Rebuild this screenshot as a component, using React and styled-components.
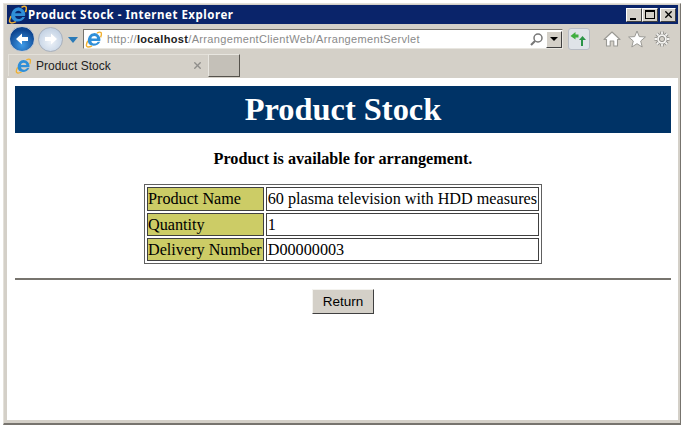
import React from 'react';
import styled, { createGlobalStyle } from 'styled-components';
import { X } from 'lucide-react';

const Global = createGlobalStyle`
  html, body {
    margin: 0;
    background: #fff;
  }
`;

const Frame = styled.div`
  box-sizing: border-box;
  width: 678px;
  height: 422px;
  margin: 3px 0 0 3px;
  background: #d4d0c8;
  border-top: 1px solid #e4e1da;
  border-left: 1px solid #e4e1da;
  border-right: 1px solid #77746e;
  border-bottom: 2px solid #77746e;
  padding: 1px 2px 3px 3px;
  display: flex;
  flex-direction: column;
`;

const TitleBar = styled.div`
  height: 19px;
  flex: none;
  background: #0a246a;
  display: flex;
  align-items: center;
  padding: 0 2px 0 1px;
  color: #fff;
`;

const TitleText = styled.span`
  font: bold 11.5px "Noto Sans", sans-serif;
  letter-spacing: 0.52px;
  margin-left: 1px;
  flex: 1;
  white-space: nowrap;
`;

const WinButton = styled.div`
  box-sizing: border-box;
  width: 16px;
  height: 14px;
  margin-left: ${p => p.$gap || 0}px;
  background: #d4d0c8;
  border: 1px solid;
  border-color: #fff #404040 #404040 #fff;
  display: flex;
  align-items: ${p => p.$align || 'center'};
  justify-content: center;
  color: #000;
`;

const MinGlyph = styled.div`
  width: 6px;
  height: 2px;
  background: #000;
  margin-bottom: 1px;
  margin-right: 3px;
`;

const MaxGlyph = styled.div`
  box-sizing: border-box;
  width: 10px;
  height: 9px;
  border: 1px solid #000;
  border-top-width: 2px;
`;

const Toolbar = styled.div`
  height: 30px;
  flex: none;
  display: flex;
  align-items: center;
  padding-left: 2px;
`;

const NavButton = styled.div`
  width: ${p => p.$size}px;
  height: ${p => p.$size}px;
  border-radius: 50%;
  margin-left: ${p => p.$gap || 0}px;
  display: flex;
  align-items: center;
  justify-content: center;
  flex: none;
  box-sizing: border-box;
  background: ${p => p.$bg};
  border: 1px solid ${p => p.$line};
`;

const RecentArrow = styled.div`
  width: 0;
  height: 0;
  margin: 1px 5px 0 5px;
  border-left: 5px solid transparent;
  border-right: 5px solid transparent;
  border-top: 6px solid #2a7ab8;
  flex: none;
`;

const AddressBar = styled.div`
  box-sizing: border-box;
  width: 480px;
  height: 20px;
  flex: none;
  background: #fff;
  border: 1px solid;
  border-color: #77746e #e8e6e0 #e8e6e0 #77746e;
  display: flex;
  align-items: center;
  padding-left: 1px;
  font: 11px "Liberation Sans", Arial, sans-serif;
  color: #8a8a8a;
`;

const UrlText = styled.span`
  flex: 1;
  margin-left: 5px;
  white-space: nowrap;
  letter-spacing: 0.34px;
  b {
    color: #222;
    font-weight: bold;
  }
`;

const DropButton = styled.div`
  box-sizing: border-box;
  width: 16px;
  height: 17px;
  margin-left: 2px;
  background: #d4d0c8;
  border: 1px solid;
  border-color: #fff #404040 #404040 #fff;
  display: flex;
  align-items: center;
  justify-content: center;
  &::after {
    content: '';
    border-left: 4px solid transparent;
    border-right: 4px solid transparent;
    border-top: 4px solid #000;
  }
`;

const CompatButton = styled.div`
  box-sizing: border-box;
  width: 22px;
  height: 22px;
  margin-left: 5px;
  border: 1px solid #b8bcc4;
  border-radius: 3px;
  background: #dfe3e8;
  display: flex;
  align-items: center;
  justify-content: center;
  flex: none;
`;

const ToolIcons = styled.div`
  display: flex;
  gap: 7px;
  margin-left: 13px;
`;

const TabRow = styled.div`
  height: 24px;
  flex: none;
  display: flex;
  align-items: flex-start;
`;

const Tab = styled.div`
  box-sizing: border-box;
  width: 200px;
  height: 22px;
  margin-left: 1px;
  display: flex;
  align-items: center;
  padding: 0 5px 0 6px;
  color: #222;
  font: 12px "Liberation Sans", Arial, sans-serif;
  border-top: 1px solid #e4e1da;
  border-left: 1px solid #e4e1da;
  span {
    flex: 1;
    margin-left: 5px;
  }
`;

const NewTab = styled.div`
  box-sizing: border-box;
  width: 32px;
  height: 23px;
  background: #c4c0b8;
  border: 1px solid;
  border-color: #e8e6e0 #55524c #55524c #e8e6e0;
`;

const Content = styled.div`
  flex: 1;
  background: #fff;
  padding: 8px 7px 0 8px;
  font-family: "Liberation Serif", "Times New Roman", serif;
  color: #000;
  text-align: center;
`;

const Banner = styled.h1`
  margin: 0;
  height: 47px;
  line-height: 47px;
  background: #003366;
  color: #fff;
  font-size: 32.4px;
  font-weight: bold;
`;

const Notice = styled.p`
  margin: 17px 0 16px;
  font-size: 16.2px;
  line-height: 18px;
  font-weight: bold;
`;

const StockTable = styled.table`
  margin: 0 auto;
  border: 1px solid #606060;
  border-spacing: 2px;
  text-align: left;
  font-size: 16.2px;
  line-height: 18px;
`;

const LabelCell = styled.th`
  border: 1px solid #404040;
  background: #cccc66;
  font-weight: normal;
  padding: 1px 1px 1px 0;
  height: ${p => p.$h || 19}px;
  white-space: nowrap;
`;

const ValueCell = styled.td`
  border: 1px solid #404040;
  padding: 1px;
  white-space: nowrap;
`;

const Rule = styled.hr`
  margin: 14px 0 9px;
  height: 2px;
  border: 0;
  background: #77746e;
`;

const ReturnButton = styled.button`
  box-sizing: border-box;
  width: 62px;
  height: 25px;
  padding: 0;
  background: #d4d0c8;
  border: 1px solid;
  border-color: #f4f3ef #404040 #404040 #f4f3ef;
  font: 13.5px "Liberation Sans", Arial, sans-serif;
  color: #000;
`;

const IeLogo = ({ size = 16 }) => (
  <svg width={size} height={size} viewBox="0 0 24 24">
    <path d="M4 14 C0 21 2 25 10 21 M17 3 C22 0 25 2 22 9" fill="none" stroke="#f0b030" strokeWidth="2" />
    <path d="M12.500 3 a9 9 0 0 1 9 11 H9 c.5 4.500 7 5 9 1 h3.500 c-3.500 8 -17.500 8 -17.500 -1.500 C4 8 8 3 12.500 3 Z M9 10.500 H17 c-.3 -4.500 -7.500 -4.500 -8 0 Z" fill="#2f8fd8" fillRule="evenodd" />
  </svg>
);

const BackArrow = ({ flip, color }) => (
  <svg width="16" height="14" viewBox="0 0 16 14" style={flip ? { transform: 'scaleX(-1)' } : undefined}>
    <path d="M8 1.500 L2 7 L8 12.500 V9 H14 V5 H8 Z" fill={color} />
  </svg>
);

const SearchIcon = () => (
  <svg width="15" height="15" viewBox="0 0 15 15">
    <circle cx="9" cy="6" r="4" fill="none" stroke="#777" strokeWidth="1.500" />
    <path d="M6 9 L2 13" stroke="#777" strokeWidth="2.200" />
  </svg>
);

const CompatIcon = () => (
  <svg width="18" height="16" viewBox="0 0 18 16">
    <path d="M5.500 1 L0.500 5 L5.500 8.500 V6.500 H8.500 V3.500 H5.500 Z" fill="#3fae3f" />
    <path d="M13 15 V9 H16 L12.500 5 L9 9 H11 V15 Z" fill="#2a9446" />
  </svg>
);

const HomeIcon = () => (
  <svg width="18" height="18" viewBox="0 0 18 18">
    <path d="M9 2 L17 9.500 H14.500 V16 H10.800 V11 H7.200 V16 H3.500 V9.500 H1 Z" fill="#fff" stroke="#9a9994" strokeWidth="1.100" strokeLinejoin="round" />
  </svg>
);

const StarIcon = () => (
  <svg width="18" height="18" viewBox="0 0 18 18">
    <path d="M9 1 L11.300 6.600 L17.400 7 L12.700 11 L14.200 17 L9 13.700 L3.800 17 L5.300 11 L0.600 7 L6.700 6.600 Z" fill="#fff" stroke="#9a9994" strokeWidth="1" strokeLinejoin="round" />
  </svg>
);

const GEAR_TEETH = 'M9 1.500 V4 M9 14 V16.500 M1.500 9 H4 M14 9 H16.500 M3.700 3.700 L5.500 5.500 M12.500 12.500 L14.300 14.300 M3.700 14.300 L5.500 12.500 M12.500 5.500 L14.300 3.700';

const GearIcon = () => (
  <svg width="18" height="18" viewBox="0 0 18 18">
    <path d={GEAR_TEETH} stroke="#8f8e8a" strokeWidth="3.600" />
    <circle cx="9" cy="9" r="5.800" fill="#8f8e8a" />
    <path d={GEAR_TEETH} stroke="#f4f3f0" strokeWidth="1.800" />
    <circle cx="9" cy="9" r="4.800" fill="#f4f3f0" />
    <circle cx="9" cy="9" r="2.600" fill="#d4d0c8" stroke="#8f8e8a" strokeWidth="1" />
  </svg>
);

export default function App() {
  return (
    <>
      <Global />
      <Frame>
        <TitleBar>
          <IeLogo size={19} />
          <TitleText>Product Stock - Internet Explorer</TitleText>
          <WinButton $align="flex-end"><MinGlyph /></WinButton>
          <WinButton><MaxGlyph /></WinButton>
          <WinButton $gap={2}><X size={11} strokeWidth={3} /></WinButton>
        </TitleBar>
        <Toolbar>
          <NavButton $size={26} $bg="radial-gradient(circle at 50% 75%, #3f9be8, #0d4590 70%)" $line="#c8ccd4">
            <BackArrow color="#fff" />
          </NavButton>
          <NavButton $size={25} $gap={3} $bg="radial-gradient(circle at 50% 60%, #eef3f9, #b4c6dc)" $line="#a8b0bc">
            <BackArrow flip color="#fff" />
          </NavButton>
          <RecentArrow />
          <AddressBar>
            <IeLogo size={17} />
            <UrlText>http://<b>localhost</b>/ArrangementClientWeb/ArrangementServlet</UrlText>
            <SearchIcon />
            <DropButton />
          </AddressBar>
          <CompatButton><CompatIcon /></CompatButton>
          <ToolIcons>
            <HomeIcon />
            <StarIcon />
            <GearIcon />
          </ToolIcons>
        </Toolbar>
        <TabRow>
          <Tab>
            <IeLogo size={16} />
            <span>Product Stock</span>
            <X size={11} strokeWidth={3} color="#8f8e8a" />
          </Tab>
          <NewTab />
        </TabRow>
        <Content>
          <Banner>Product Stock</Banner>
          <Notice>Product is available for arrangement.</Notice>
          <StockTable>
            <tbody>
              <tr>
                <LabelCell $h={20}>Product Name</LabelCell>
                <ValueCell>60 plasma television with HDD measures</ValueCell>
              </tr>
              <tr>
                <LabelCell>Quantity</LabelCell>
                <ValueCell>1</ValueCell>
              </tr>
              <tr>
                <LabelCell>Delivery Number</LabelCell>
                <ValueCell>D00000003</ValueCell>
              </tr>
            </tbody>
          </StockTable>
          <Rule />
          <ReturnButton>Return</ReturnButton>
        </Content>
      </Frame>
    </>
  );
}
